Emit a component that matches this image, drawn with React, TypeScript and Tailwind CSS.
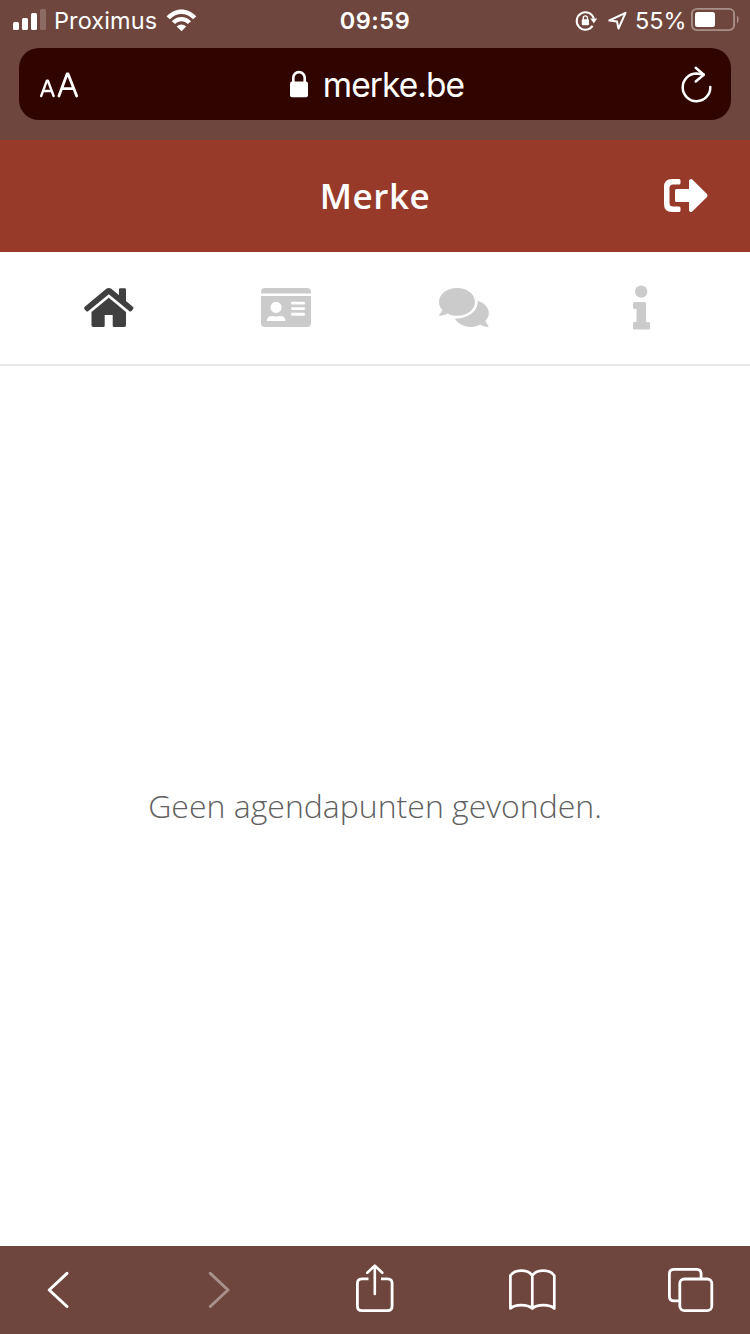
import type { ReactNode } from "react";

type IconProps = {
  box: string;
  className: string;
  children: ReactNode;
};

function Icon({ box, className, children }: IconProps) {
  return (
    <svg viewBox={box} className={`block shrink-0 ${className}`} fill="currentColor" aria-hidden="true">
      {children}
    </svg>
  );
}

function StatusBar() {
  return (
    <div className="grid h-10 grid-cols-3 items-center text-[23.5px] leading-[28px]">
      <div className="flex items-center pl-[13px]">
        <Icon box="13 0 33 40" className="h-10 w-[33px]">
          <rect x="13" y="22" width="6" height="8" rx="1.5" />
          <rect x="22" y="18" width="6" height="12" rx="1.5" />
          <rect x="31" y="13" width="6" height="17" rx="1.5" />
          <rect x="40" y="9" width="6" height="21" rx="1.5" opacity=".2" />
        </Icon>
        <span className="ml-[8px] w-[105px] whitespace-nowrap pt-[2px] tracking-[0.1px]">Proximus</span>
        <Icon box="166 0 31 40" className="ml-[7px] h-10 w-[31px]">
          <path d="M166.6 16.4C174.9 7.2 188 7.2 196.3 16.4L193 19.2C186.5 12.3 176.4 12.3 169.9 19.2Z" />
          <path d="M171.8 21.3C177.2 15.6 185.7 15.6 191.1 21.3L187.8 24C184.2 20.3 178.7 20.3 175.1 24Z" />
          <path d="M176.7 26.6C179.5 23.7 183.4 23.7 186.2 26.6L181.5 31.2Z" />
        </Icon>
      </div>
      <div className="pt-[2px] text-center font-semibold tracking-[0.5px]">09:59</div>
      <div className="flex items-center justify-end pr-[10px]">
        <Icon box="575 0 24 40" className="h-10 w-[24px]">
          <path d="M593.8 18.6A8.7 8.7 0 1 0 592.6 25.9" fill="none" stroke="currentColor" strokeWidth="2" />
          <path d="M590.3 18.6H597.2L593.8 23.2Z" />
          <rect x="581.8" y="19.3" width="7.2" height="6" rx="1" />
          <path d="M583.3 20V18A2.1 2.1 0 0 1 587.5 18V20" fill="none" stroke="currentColor" strokeWidth="1.4" />
        </Icon>
        <Icon box="608 0 19 40" className="ml-[9px] h-10 w-[19px]">
          <path
            d="M625.5 12.8L609.3 20.5L617 21.6L618.5 28.6Z"
            fill="none"
            stroke="currentColor"
            strokeWidth="2"
            strokeLinejoin="round"
          />
        </Icon>
        <span className="ml-[8px] w-[51px] whitespace-nowrap pt-[2px]">55%</span>
        <Icon box="691 0 49 40" className="ml-[5px] h-10 w-[49px]">
          <rect x="691.9" y="8.9" width="42.2" height="21.2" rx="5" fill="none" stroke="currentColor" strokeWidth="1.9" opacity=".4" />
          <rect x="695" y="12" width="20" height="15" rx="2.5" />
          <path d="M737 15.5C739.2 17 739.2 22 737 23.5Z" opacity=".4" />
        </Icon>
      </div>
    </div>
  );
}

function AddressBar() {
  return (
    <div className="mx-[19px] mt-2 grid h-[72px] grid-cols-[1fr_auto_1fr] items-center rounded-[20px] bg-[#300500]">
      <div className="flex pl-5">
        <Icon box="39 70 40 28" className="h-7 w-[40px]">
          <g fill="none" stroke="currentColor" strokeLinecap="round" strokeLinejoin="round">
            <path d="M41.2 96L46.9 80.6H47.9L53.6 96M43.2 91H51.5" strokeWidth="2.4" />
            <path d="M58.9 96L67.1 74H68.1L76.7 96M61.8 88.7H73.6" strokeWidth="2.8" />
          </g>
        </Icon>
      </div>
      <div className="flex items-center pl-[3px]">
        <Icon box="289 68 20 32" className="h-8 w-5">
          <rect x="290" y="81.5" width="18" height="15.7" rx="2" />
          <path d="M293.3 83V77.8A5.7 5.7 0 0 1 304.7 77.8V83" fill="none" stroke="currentColor" strokeWidth="2.6" />
        </Icon>
        <span className="ml-[14px] pt-[2px] text-[33.5px] leading-10 tracking-[-0.95px]">merke.be</span>
      </div>
      <Icon box="680 64 34 40" className="mr-[17px] h-10 w-[34px] justify-self-end">
        <g fill="none" stroke="currentColor" strokeWidth="2.5" strokeLinecap="round" strokeLinejoin="round">
          <path d="M710.3 87A13.8 13.8 0 1 1 696.5 73.6L703.8 74.6" />
          <path d="M695.7 67.8L703.8 74.7L695.7 81.5" />
        </g>
      </Icon>
    </div>
  );
}

function SiteHeader() {
  return (
    <header className="grid h-28 grid-cols-[1fr_auto_1fr] items-center bg-[#973a2a] text-white">
      <h1 className="col-start-2 font-['Open_Sans',sans-serif] text-[35px] font-semibold leading-[50px] tracking-[0.6px]">Merke</h1>
      <button type="button" aria-label="Log out" className="mr-[42px] justify-self-end">
        <Icon box="664 178 44 36" className="h-9 w-11">
          <path d="M672 179H679A1.5 1.5 0 0 1 680.5 180.5V183A1.5 1.5 0 0 1 679 184.5H673Q669.5 184.5 669.5 188V203Q669.5 206.5 673 206.5H679A1.5 1.5 0 0 1 680.5 208V210.5A1.5 1.5 0 0 1 679 212H672Q664 212 664 204V187Q664 179 672 179Z" />
          <path d="M676.5 189H689V180.5Q690 178.3 692 179.3L707 194Q708 195.5 707 197L692 211.7Q690 212.7 689 210.5V202H676.5Q675 202 675 200.5V190.5Q675 189 676.5 189Z" />
        </Icon>
      </button>
    </header>
  );
}

function TabBar() {
  return (
    <nav className="grid h-[114px] grid-cols-4 items-center border-b-2 border-[#e8e8e8] px-5 text-[#cbcbcb]">
      <Icon box="84 283 50 50" className="size-[50px] justify-self-center text-[#404040]">
        <path d="M106.3 288.8Q108.8 287.2 111.3 288.8L119 295.3V289.5Q119 288.3 120.2 288.3H124.8Q126 288.3 126 289.5V301L132.8 306.7Q134 307.8 133.2 309L131.5 311Q130.4 312 129.2 311L108.8 294.3L88.4 311Q87.2 312 86.1 311L84.4 309Q83.6 307.8 84.8 306.7Z" />
        <path d="M108.8 297.7L126 312V325.3Q126 327 124.3 327H114Q112.7 327 112.7 325.7V315H104.7V325.7Q104.7 327 103.4 327H93.2Q91.5 327 91.5 325.3V312Z" />
      </Icon>
      <Icon box="261 283 50 50" className="size-[50px] justify-self-center">
        <path d="M265 288H307Q311 288 311 292V293.5H261V292Q261 288 265 288Z" />
        <path
          fillRule="evenodd"
          d="M261 296H311V323Q311 327 307 327H265Q261 327 261 323ZM281.7 307.4A5.6 5.6 0 1 0 270.5 307.4A5.6 5.6 0 1 0 281.7 307.4ZM267.8 321H284.6Q285.6 321 285.5 320C285 317.2 283 315.9 280.8 315.9C279 315.9 278 316.6 276.2 316.6S273.4 315.9 271.6 315.9C269.4 315.9 267.3 317.2 266.8 320Q266.7 321 267.8 321ZM292 301.8Q291 301.8 291 303.1Q291 304.6 292 304.6H304Q305 304.6 305 303.1Q305 301.8 304 301.8ZM292 307.3Q291 307.3 291 308.7Q291 310.1 292 310.1H304Q305 310.1 305 308.7Q305 307.3 304 307.3ZM292 312.8Q291 312.8 291 314.3Q291 315.7 292 315.7H304Q305 315.7 305 314.3Q305 312.8 304 312.8Z"
        />
      </Icon>
      <Icon box="439 283 50 50" className="size-[50px] justify-self-center">
        <path d="M457 288.1C447 288.1 439 294.2 439 301.9C439 304.9 440.3 307.7 442.3 310C441.3 312.2 440.2 313.6 439.2 314.5Q438.8 315.6 439.8 315.7C442.6 315.7 445.5 314.8 447.5 313.5C450.3 315 453.4 315.8 457 315.8C467 315.8 475 309.6 475 301.9S467 288.1 457 288.1Z" />
        <path d="M477.6 300.7C478.6 309.8 469.4 318.7 454.7 318.6C457.8 323.6 463.4 326.9 470.7 326.9C474.3 326.9 477.6 326 480.3 324.6C482.5 326 485.3 326.9 487.9 326.9Q488.9 326.8 488.4 325.7C487.4 324.8 486.2 323.2 485.4 321.1C487.4 318.8 488.8 316 488.8 313C488.8 307.4 484.2 302.8 477.6 300.7Z" />
      </Icon>
      <Icon box="616 283 50 50" className="size-[50px] justify-self-center">
        <circle cx="641.2" cy="291.6" r="6.2" />
        <path d="M634.5 302H644.5Q646 302 646 303.5V322H648.5Q650 322 650 323.5V328Q650 329.5 648.5 329.5H634.5Q633 329.5 633 328V323.5Q633 322 634.5 322H636.5V309H634.5Q633 309 633 307.5V303.5Q633 302 634.5 302Z" />
      </Icon>
    </nav>
  );
}

function BrowserToolbar() {
  return (
    <footer className="flex h-[88px] items-center bg-[#6e463d] pl-[45px] text-white">
      <Icon box="45 1262 28 56" className="h-14 w-7">
        <path d="M67 1273.3L49.2 1290L67 1306.5" fill="none" stroke="currentColor" strokeWidth="3" strokeLinecap="round" strokeLinejoin="round" />
      </Icon>
      <Icon box="205 1262 28 56" className="ml-[132px] h-14 w-7 opacity-40">
        <path d="M210.3 1273.3L228 1290L210.3 1306.5" fill="none" stroke="currentColor" strokeWidth="3" strokeLinecap="round" strokeLinejoin="round" />
      </Icon>
      <Icon box="354 1262 42 56" className="ml-[121px] h-14 w-[42px]">
        <g fill="none" stroke="currentColor" strokeWidth="2.8" strokeLinecap="round" strokeLinejoin="round">
          <path d="M368.5 1278.8H362Q357.4 1278.8 357.4 1283.4V1306Q357.4 1310.6 362 1310.6H387.5Q392.1 1310.6 392.1 1306V1283.4Q392.1 1278.8 387.5 1278.8H381" strokeLinecap="butt" />
          <path d="M374.8 1294V1266M367.3 1272.8L374.8 1265.6L382.3 1272.8" strokeWidth="2.6" />
        </g>
      </Icon>
      <Icon box="507 1262 51 56" className="ml-[111px] h-14 w-[51px]">
        <path
          d="M532.3 1308.5V1275.5C528 1269 515 1269 510.4 1275.5V1308.5C515 1304 527.5 1304 532.3 1308.5C537 1304 549.7 1304 554.3 1308.5V1275.5C549.7 1269 536.7 1269 532.3 1275.5"
          fill="none"
          stroke="currentColor"
          strokeWidth="2.7"
          strokeLinejoin="round"
        />
      </Icon>
      <Icon box="666 1262 49 56" className="ml-[108px] h-14 w-[49px]">
        <g fill="none" stroke="currentColor" strokeWidth="2.8">
          <path d="M679.5 1300.8H674Q669.4 1300.8 669.4 1296.2V1274Q669.4 1269.4 674 1269.4H696.5Q701.1 1269.4 701.1 1274V1279" />
          <rect x="679.8" y="1279" width="32" height="31.6" rx="4.6" />
        </g>
      </Icon>
    </footer>
  );
}

export default function App() {
  return (
    <div className="flex h-[1334px] w-[750px] flex-col overflow-hidden bg-white">
      <div className="h-[140px] shrink-0 bg-[#6e463d] font-['Inter',sans-serif] text-white">
        <StatusBar />
        <AddressBar />
      </div>
      <SiteHeader />
      <TabBar />
      <main className="flex flex-1 items-center justify-center">
        <p className="font-['Open_Sans',sans-serif] text-[32px] font-light leading-[46px] text-[#606060]">Geen agendapunten gevonden.</p>
      </main>
      <BrowserToolbar />
    </div>
  );
}
